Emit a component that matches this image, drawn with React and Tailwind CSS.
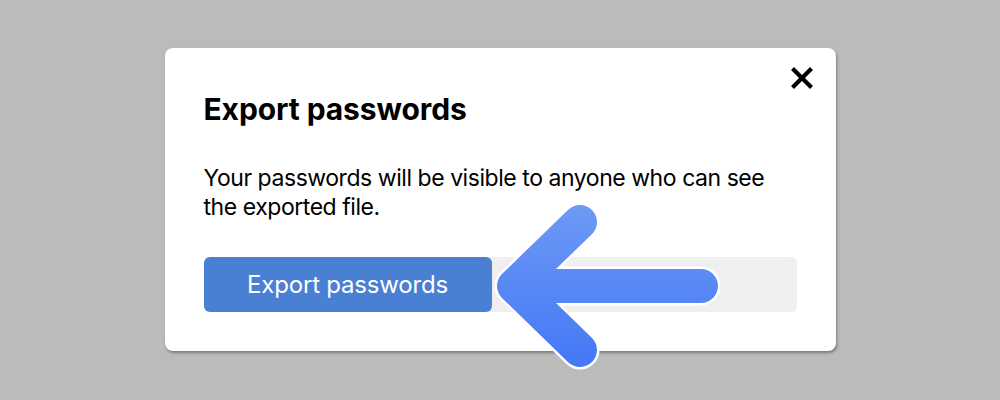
import React from 'react';

/* ── Pointer arrow overlay ─────────────────────────────── */

function PointerArrow() {
  const d = 'M580 222 L514 286 L580 350 M514 286 L701 286';
  return (
    <svg
      className="absolute left-0 top-0 pointer-events-none"
      width="1000"
      height="400"
      viewBox="0 0 1000 400"
    >
      <defs>
        <linearGradient id="arrowFill" x1="0" y1="200" x2="0" y2="370" gradientUnits="userSpaceOnUse">
          <stop offset="0" stopColor="#6f9af5" />
          <stop offset="1" stopColor="#4377f6" />
        </linearGradient>
      </defs>
      <path d={d} fill="none" stroke="#ffffff" strokeWidth="39" strokeLinecap="round" strokeLinejoin="round" />
      <path d={d} fill="none" stroke="url(#arrowFill)" strokeWidth="34" strokeLinecap="round" strokeLinejoin="round" />
    </svg>
  );
}

/* ── Export dialog ─────────────────────────────────────── */

export default function App() {
  return (
    <div
      className="relative w-[1000px] h-[400px] bg-[#bbbbbb] overflow-hidden flex items-start justify-center pt-[48px]"
      style={{ fontFamily: 'Inter, "Liberation Sans", sans-serif' }}
    >
      <div className="w-[671px] h-[303px] bg-white rounded-[8px] shadow-[1px_2px_3px_rgba(0,0,0,0.35)] pl-[39px] pr-[23px] pt-[19px] flex flex-col">
        <div className="flex justify-end h-[22px]">
          <svg width="22" height="22" viewBox="0 0 22 22">
            <path d="M3 3 L19 19 M19 3 L3 19" stroke="#000" strokeWidth="4.2" strokeLinecap="square" />
          </svg>
        </div>
        <h2 className="text-[30px] font-bold leading-[34px] text-black mt-[3px] tracking-[-0.1px]">Export passwords</h2>
        <p className="text-[23px] leading-[29px] text-black mt-[38px] w-[585px] tracking-[-0.45px]">
          Your passwords will be visible to anyone who can see the exported file.
        </p>
        <div className="mt-[35px] mr-[16px] h-[55px] bg-[#efefef] rounded-[6px] flex">
          <button className="w-[288px] h-[55px] bg-[#4a80d4] rounded-[6px] text-white text-[24px] tracking-[-0.2px]">
            Export passwords
          </button>
        </div>
      </div>
      <PointerArrow />
    </div>
  );
}
